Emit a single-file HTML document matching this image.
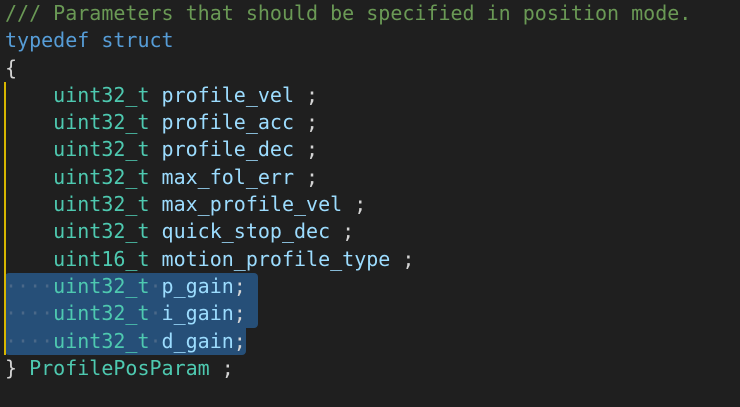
<!DOCTYPE html>
<html><head><style>
html,body{margin:0;padding:0;background:#1f1f1f;width:740px;height:407px;overflow:hidden}
.c{position:absolute;left:5px;top:0;font-family:"DejaVu Sans Mono","Liberation Mono",monospace;font-size:20px;line-height:27.3px;color:#d4d4d4}
.l{height:27.3px;white-space:pre}
.cm{color:#6a9955}.k{color:#569cd6}.t{color:#4ec9b0}.v{color:#9cdcfe}.d{color:#4a6888}
.sel{position:absolute;background:#264f78}
</style></head><body>
<div class="sel" style="left:5px;top:273px;width:253px;height:54.6px;border-radius:4px 4px 4px 0"></div>
<div class="sel" style="left:5px;top:327.6px;width:241px;height:27.3px;border-radius:0 0 4px 4px"></div>
<div style="position:absolute;left:4px;top:82px;width:2px;height:273px;background:#d7b600"></div>
<div class="c"><div class="l"><span class="cm">/// Parameters that should be specified in position mode.</span></div><div class="l"><span class="k">typedef struct</span></div><div class="l">{</div><div class="l">    <span class="t">uint32_t</span> <span class="v">profile_vel</span> ;</div><div class="l">    <span class="t">uint32_t</span> <span class="v">profile_acc</span> ;</div><div class="l">    <span class="t">uint32_t</span> <span class="v">profile_dec</span> ;</div><div class="l">    <span class="t">uint32_t</span> <span class="v">max_fol_err</span> ;</div><div class="l">    <span class="t">uint32_t</span> <span class="v">max_profile_vel</span> ;</div><div class="l">    <span class="t">uint32_t</span> <span class="v">quick_stop_dec</span> ;</div><div class="l">    <span class="t">uint16_t</span> <span class="v">motion_profile_type</span> ;</div><div class="l"><span class="d">····</span><span class="t">uint32_t</span><span class="d">·</span><span class="v">p_gain</span>;</div><div class="l"><span class="d">····</span><span class="t">uint32_t</span><span class="d">·</span><span class="v">i_gain</span>;</div><div class="l"><span class="d">····</span><span class="t">uint32_t</span><span class="d">·</span><span class="v">d_gain</span>;</div><div class="l">} <span class="t">ProfilePosParam</span> ;</div></div>
</body></html>
